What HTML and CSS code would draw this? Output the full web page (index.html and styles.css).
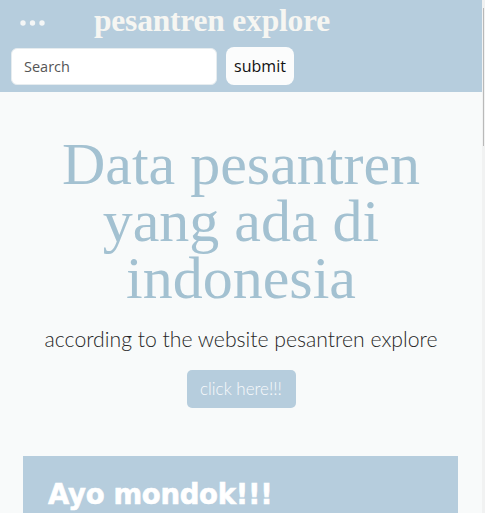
FILE: index.html
```html
<!DOCTYPE html>
<html lang="id">
<head>
<meta charset="utf-8">
<title>pesantren explore</title>
<link rel="stylesheet" href="styles.css">
</head>
<body>
<header class="topbar">
  <div class="brand-row">
    <span class="menu-dots" aria-label="menu">
      <svg width="26" height="8" viewBox="0 0 26 8"><circle cx="3" cy="4" r="2.7" fill="#f4f6f6"/><circle cx="12.5" cy="4" r="2.7" fill="#f4f6f6"/><circle cx="22" cy="4" r="2.7" fill="#f4f6f6"/></svg>
    </span>
    <span class="brand">pesantren explore</span>
  </div>
  <form class="search-row">
    <input class="search-input" type="text" placeholder="Search">
    <button class="submit-btn" type="button">submit</button>
  </form>
</header>
<main class="hero">
  <h1 class="hero-title">Data pesantren<br>yang ada di<br>indonesia</h1>
  <p class="hero-sub">according to the website pesantren explore</p>
  <a class="cta" href="#">click here!!!</a>
</main>
<section class="card">
  <h2 class="card-title">Ayo mondok!!!</h2>
</section>
<div class="scrollbar"><div class="scroll-thumb"></div></div>
</body>
</html>
```
FILE: styles.css
```css
html, body {
  margin: 0;
  padding: 0;
}
body {
  background: #f8fafa;
  width: 482px;
  overflow: hidden;
  font-family: "Lato", "Open Sans", sans-serif;
}
.topbar {
  background: #b6cddd;
  height: 92px;
  padding: 0 11px;
  box-sizing: border-box;
}
.brand-row {
  display: flex;
  align-items: center;
  height: 47px;
}
.menu-dots {
  display: flex;
  margin-left: 9px;
  margin-top: -2px;
}
.brand {
  margin-left: 48px;
  font-family: "Liberation Serif", serif;
  font-weight: 700;
  font-size: 31.5px;
  letter-spacing: -0.2px;
  color: #f6f6f2;
  line-height: 1;
  margin-top: -6px;
}
.search-row {
  display: flex;
  gap: 9px;
  align-items: center;
  margin: 0;
}
.search-input {
  width: 206px;
  height: 37px;
  box-sizing: border-box;
  border: 1px solid #e6ecef;
  border-radius: 6px;
  background: #ffffff;
  padding: 0 12px;
  font-family: "Open Sans", sans-serif;
  font-size: 14.5px;
  color: #333;
}
.search-input::placeholder {
  color: #555;
}
.submit-btn {
  height: 38px;
  width: 68px;
  border: none;
  border-radius: 8px;
  background: #fbfcfc;
  font-family: "Open Sans", sans-serif;
  font-size: 16px;
  color: #111;
  padding: 0;
}
.hero {
  text-align: center;
  padding-top: 44px;
}
.hero-title {
  margin: 0;
  font-family: "Liberation Serif", serif;
  font-weight: 400;
  font-size: 60px;
  line-height: 57px;
  color: #a3c1d1;
}
.hero-sub {
  margin: 20px 0 0;
  font-family: "Lato", sans-serif;
  font-weight: 300;
  font-size: 21.2px;
  line-height: 24px;
  color: #262626;
}
.cta {
  display: inline-block;
  margin-top: 19px;
  width: 109px;
  height: 38px;
  line-height: 38px;
  border-radius: 5px;
  background: #b6cddd;
  color: #f8fafc;
  font-family: "Lato", sans-serif;
  font-weight: 300;
  font-size: 17px;
  text-decoration: none;
}
.card {
  margin: 48px 0 0 23px;
  width: 435px;
  height: 120px;
  background: #b6cddd;
  padding: 22px 25px 0;
  box-sizing: border-box;
}
.card-title {
  margin: 0;
  font-family: "DejaVu Sans", sans-serif;
  font-weight: 700;
  font-size: 27.5px;
  letter-spacing: -0.3px;
  color: #ffffff;
  -webkit-text-stroke: 0.6px #ffffff;
}
.scrollbar {
  position: fixed;
  top: 0;
  right: 0;
  bottom: 0;
  width: 3px;
  background: #f1f2f2;
}
.scroll-thumb {
  margin: 8px 0 0 1px;
  width: 1px;
  height: 138px;
  background: #b9b9b9;
}
```
